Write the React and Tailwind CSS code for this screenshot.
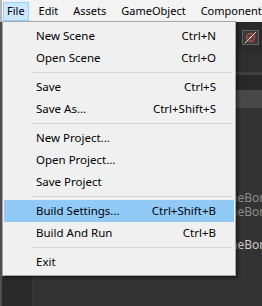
import React from 'react';

const font = { fontFamily: '"Noto Sans", "Open Sans", sans-serif' };

const menuBar = ['File', 'Edit', 'Assets', 'GameObject', 'Component'];

const fileMenu = [
  { label: 'New Scene', shortcut: 'Ctrl+N' },
  { label: 'Open Scene', shortcut: 'Ctrl+O' },
  { sep: true },
  { label: 'Save', shortcut: 'Ctrl+S' },
  { label: 'Save As...', shortcut: 'Ctrl+Shift+S' },
  { sep: true },
  { label: 'New Project...' },
  { label: 'Open Project...' },
  { label: 'Save Project' },
  { sep: true },
  { label: 'Build Settings...', shortcut: 'Ctrl+Shift+B', active: true },
  { label: 'Build And Run', shortcut: 'Ctrl+B' },
  { sep: true },
  { label: 'Exit' },
];

const PreviewIcon = () => (
  <svg width="17" height="15" viewBox="0 0 17 15">
    <rect x="0.5" y="0.5" width="16" height="14" fill="#3b3b3b" stroke="#626262" />
    <circle cx="8.5" cy="7.5" r="4" fill="none" stroke="#c0504a" strokeWidth="1.4" />
    <circle cx="8.5" cy="7.5" r="1.6" fill="#d8605a" />
    <line x1="3" y1="13" x2="14" y2="2" stroke="#d9d9d9" strokeWidth="1" />
  </svg>
);

const App = () => {
  return (
    <div className="relative w-[262px] h-[306px] overflow-hidden bg-[#333333] text-[11.5px]" style={font}>
      {/* menu bar */}
      <div className="flex items-center h-[22px] bg-[#f3f3f3] border-l-2 border-[#b5b5b5] pl-px whitespace-nowrap text-[11px]">
        {menuBar.map((item, i) => (
          <div
            key={item}
            className={
              i === 0
                ? 'h-[19px] flex items-center px-[3px] mr-[5px] bg-[#cce8ff] border border-[#99d1ff] text-black'
                : 'h-[19px] flex items-center px-[4px] mr-[5px] border border-transparent text-black'
            }
          >
            {item}
          </div>
        ))}
      </div>

      {/* editor behind */}
      <div className="flex h-[284px]">
        <div className="w-[33px] shrink-0 bg-[#2a2a2a] border-l-2 border-[#4e4e4e] border-r border-r-[#3a3a3a]" />
        <div className="flex-1 min-w-0 overflow-hidden flex flex-col">
          <div className="h-[30px] bg-[#2b2b2b] flex items-center justify-end pr-[3px]">
            <PreviewIcon />
          </div>
          <div className="h-[20px] bg-[#2f2f2f]" />
          <div className="h-[3px] bg-[#3e3e3e]" />
          <div className="h-[15px] bg-[#282828]" />
          <div className="h-[18px] bg-[#484848]" />
          <div className="flex-1 bg-[#333333] flex flex-col text-[12px] whitespace-nowrap">
            <div className="h-[14px] mt-[83px] pl-[180px] leading-[14px] text-[#8c8c8c]">SpineBone</div>
            <div className="h-[14px] pl-[180px] leading-[14px] text-[#8c8c8c]">SpineBone</div>
            <div className="h-[14px] mt-[19px] pl-[180px] leading-[14px] text-[#c9c9c9]">SpineBone</div>
          </div>
        </div>
      </div>

      {/* File dropdown */}
      <div className="absolute left-[2px] top-[21px] w-[234px] bg-[#f0f0f0] border border-[#a8a8a8] px-px pt-[3px] pb-[2px] shadow-[2px_2px_3px_rgba(0,0,0,0.45)] whitespace-nowrap">
        {fileMenu.map((item, i) =>
          item.sep ? (
            <div key={i} className="h-[7px] flex items-center ml-[28px] mr-[2px]">
              <div className="h-px w-full bg-[#d6d6d6]" />
            </div>
          ) : (
            <div
              key={i}
              className={`h-[22px] flex items-center justify-between pl-[32px] pr-[18px] text-black ${
                item.active ? 'bg-[#91c9f7]' : ''
              }`}
            >
              <span>{item.label}</span>
              {item.shortcut && <span>{item.shortcut}</span>}
            </div>
          )
        )}
      </div>
    </div>
  );
};

export default App;
